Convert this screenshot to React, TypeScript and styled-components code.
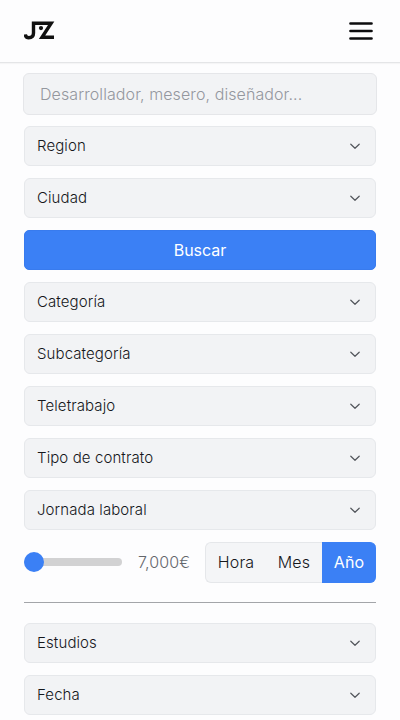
import React from 'react';
import styled, { createGlobalStyle } from 'styled-components';

const GlobalStyle = createGlobalStyle`
  *, *::before, *::after { box-sizing: border-box; }
  body {
    margin: 0;
    background: #fdfdfe;
    color: #202226;
    font-family: Inter, sans-serif;
    overflow: hidden;
  }
  button, input { font: inherit; }
`;

const Page = styled.div`
  height: 720px;
  overflow: hidden;
`;

const Header = styled.header`
  display: flex;
  align-items: center;
  justify-content: space-between;
  height: 63px;
  padding: 0 24px;
  border-bottom: 1px solid #e4e5e7;
  box-shadow: 0 1px 1px rgba(0, 0, 0, 0.03);
`;

const Logo = styled.svg`
  display: block;
  width: 32px;
  height: 22px;
`;

const MenuButton = styled.button`
  display: flex;
  padding: 0;
  border: 0;
  background: none;
  margin-right: 2px;
`;

const Filters = styled.main`
  display: flex;
  flex-direction: column;
  gap: 12px;
  padding: 10px 24px 0;
`;

const SearchInput = styled.input`
  height: 42px;
  margin: 0 -1px -1px;
  padding: 0 16px;
  border: 1px solid #e5e6e9;
  border-radius: 6px;
  background: #f2f3f5;
  font-size: 16px;
  font-weight: 300;
  letter-spacing: 0.09px;
  outline: none;
  &::placeholder { color: #94979e; opacity: 1; }
`;

const SelectBox = styled.button`
  display: flex;
  align-items: center;
  justify-content: space-between;
  flex: none;
  height: 40px;
  padding: 0 14px 0 12px;
  border: 1px solid #e6e8eb;
  border-radius: 6px;
  background: #f2f3f5;
  color: #15171b;
  font-size: 15px;
  font-weight: 300;
  letter-spacing: 0.1px;
  text-align: left;
`;

const SelectLabel = styled.span`
  padding-bottom: 1px;
`;

const SubmitButton = styled.button`
  height: 40px;
  border: 1px solid #387bee;
  border-radius: 5px;
  background: #3b80f5;
  color: #fff;
  font-size: 16px;
`;

const SalaryRow = styled.div`
  display: flex;
  align-items: center;
  height: 40px;
`;

const Track = styled.div`
  display: flex;
  align-items: center;
  width: 98px;
  height: 8px;
  border-radius: 4px;
  background: #d2d2d3;
`;

const Thumb = styled.span`
  width: 20px;
  height: 20px;
  flex: none;
  border-radius: 50%;
  background: #3b80f5;
`;

const Amount = styled.span`
  margin-left: 16px;
  width: 67px;
  color: #64676c;
  font-size: 16px;
  font-weight: 300;
  letter-spacing: 0.1px;
`;

const Periods = styled.div`
  display: flex;
  flex: 1;
  height: 41px;
`;

const Period = styled.button<{ $width: number; $active?: boolean }>`
  width: ${p => p.$width}px;
  flex: none;
  padding: 0;
  border: 1px solid ${p => (p.$active ? '#3b80f5' : '#e5e7ea')};
  border-left-width: 0;
  border-right-width: 0;
  background: ${p => (p.$active ? '#3b80f5' : '#f4f5f7')};
  color: ${p => (p.$active ? '#fff' : '#15171b')};
  font-size: 16px;
  font-weight: ${p => (p.$active ? 400 : 300)};
  letter-spacing: 0.15px;
  &:first-child {
    border-left-width: 1px;
    border-radius: 6px 0 0 6px;
  }
  &:last-child { border-radius: 0 6px 6px 0; }
`;

const Divider = styled.hr`
  width: 100%;
  height: 1px;
  margin: 8px 0;
  border: 0;
  background: #a3a5a9;
`;

const Select = ({ label }: { label: string }) => (
  <SelectBox type="button">
    <SelectLabel>{label}</SelectLabel>
    <svg width="12" height="12" viewBox="0 0 12 12" fill="none" stroke="#53565c" strokeWidth="1.2" strokeLinecap="round" strokeLinejoin="round">
      <path d="M1.8 4.2 6 8.3l4.2-4.1" />
    </svg>
  </SelectBox>
);

export default function App() {
  return (
    <Page>
      <GlobalStyle />
      <Header>
        <Logo viewBox="0 0 32 22" aria-label="JZ">
          <path d="M1.3 14.4c.2 2.2 1.4 3.3 3.4 3.3 2.8 0 4.8-1.5 4.8-4.7V3.2h17.7L18 17.3h12" fill="none" stroke="#111" strokeWidth="3.4" />
          <circle cx="17" cy="8.1" r="2.1" fill="#111" />
        </Logo>
        <MenuButton type="button" aria-label="Menú">
          <svg width="26" height="22" viewBox="0 0 26 22" stroke="#0c0c0e" strokeWidth="2.7" strokeLinecap="round">
            <path d="M2.5 3.5h21M2.5 11h21M2.5 18.5h21" />
          </svg>
        </MenuButton>
      </Header>
      <Filters>
        <SearchInput placeholder="Desarrollador, mesero, diseñador..." />
        <Select label="Region" />
        <Select label="Ciudad" />
        <SubmitButton type="button">Buscar</SubmitButton>
        <Select label="Categoría" />
        <Select label="Subcategoría" />
        <Select label="Teletrabajo" />
        <Select label="Tipo de contrato" />
        <Select label="Jornada laboral" />
        <SalaryRow>
          <Track><Thumb /></Track>
          <Amount>7,000€</Amount>
          <Periods>
            <Period type="button" $width={61}>Hora</Period>
            <Period type="button" $width={56}>Mes</Period>
            <Period type="button" $width={54} $active>Año</Period>
          </Periods>
        </SalaryRow>
        <Divider />
        <Select label="Estudios" />
        <Select label="Fecha" />
      </Filters>
    </Page>
  );
}
